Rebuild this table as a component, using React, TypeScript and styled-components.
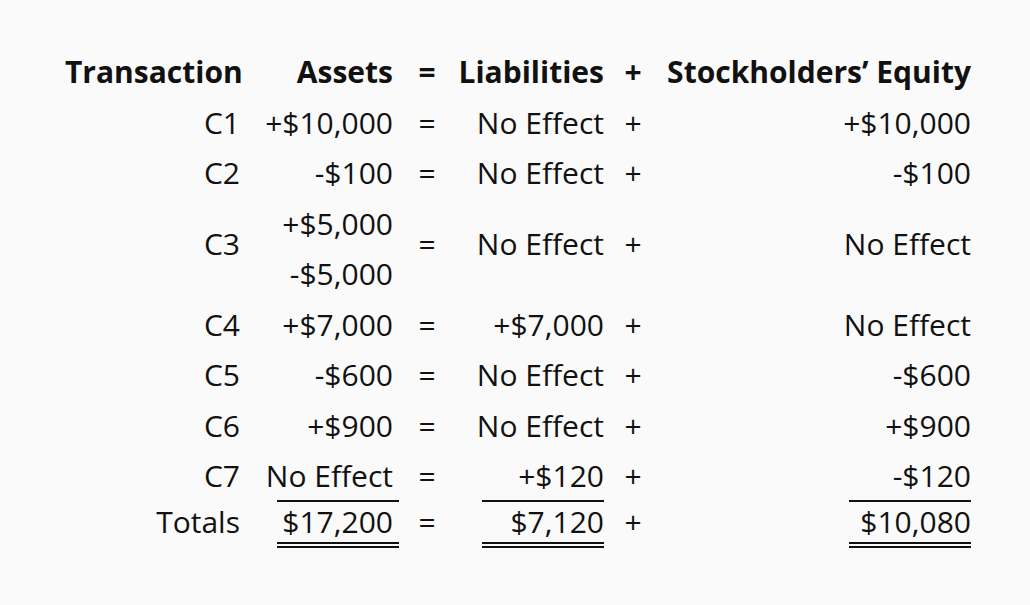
import React from "react";
import styled, { createGlobalStyle } from "styled-components";

const Global = createGlobalStyle`
  html, body { margin: 0; padding: 0; background: #fafafa; }
  body { font-family: "Open Sans", "Noto Sans", sans-serif; color: #111; }
`;

const Page = styled.div`
  width: 1030px;
  height: 605px;
  box-sizing: border-box;
  padding: 47px 0 0 65px;
  background: #fafafa;
`;

const Table = styled.div`
  display: grid;
  grid-template-columns: 175px 159px 56px 149px 58px 309px;
  font-size: 30px;
  line-height: 50.5px;
`;

const Cell = styled.div<{ $align?: "left" | "right" | "center"; $bold?: boolean; $pr?: number; $lift?: number }>`
  display: flex;
  flex-direction: column;
  justify-content: center;
  align-items: ${(p) => (p.$align === "center" ? "center" : p.$align === "left" ? "flex-start" : "flex-end")};
  font-weight: ${(p) => (p.$bold ? 700 : 400)};
  padding-right: ${(p) => p.$pr ?? 0}px;
  padding-bottom: ${(p) => (p.$lift ?? 0) * 2}px;
  white-space: nowrap;
`;

const TotalCell = styled(Cell)`
  line-height: 35px;
  justify-content: flex-start;
`;

const Ruled = styled.div<{ $rule: "single" | "double"; $pr?: number }>`
  display: flex;
  justify-content: flex-end;
  width: 122px;
  box-sizing: border-box;
  line-height: ${(p) => (p.$rule === "double" ? "35px" : "48px")};
  padding-right: ${(p) => p.$pr ?? 0}px;
  padding-bottom: ${(p) => (p.$rule === "double" ? 3 : 0)}px;
  border-bottom: ${(p) => (p.$rule === "double" ? "6px double #111" : "2px solid #111")};
`;

type Row = { label: string; assets: string[]; liab: string; eq: string };

const rows: Row[] = [
  { label: "C1", assets: ["+$10,000"], liab: "No Effect", eq: "+$10,000" },
  { label: "C2", assets: ["-$100"], liab: "No Effect", eq: "-$100" },
  { label: "C3", assets: ["+$5,000", "-$5,000"], liab: "No Effect", eq: "No Effect" },
  { label: "C4", assets: ["+$7,000"], liab: "+$7,000", eq: "No Effect" },
  { label: "C5", assets: ["-$600"], liab: "No Effect", eq: "-$600" },
  { label: "C6", assets: ["+$900"], liab: "No Effect", eq: "+$900" },
];

export default function App() {
  return (
    <Page>
      <Global />
      <Table>
        <Cell $align="left" $bold>Transaction</Cell>
        <Cell $bold $pr={6}>Assets</Cell>
        <Cell $align="center" $bold>=</Cell>
        <Cell $bold>Liabilities</Cell>
        <Cell $align="center" $bold>+</Cell>
        <Cell $bold>Stockholders’ Equity</Cell>

        {rows.map((r) => {
          const lift = r.assets.length > 1 ? 5 : 0;
          return (
            <React.Fragment key={r.label}>
              <Cell $lift={lift}>{r.label}</Cell>
              <Cell $pr={6}>
                {r.assets.map((a) => (
                  <span key={a}>{a}</span>
                ))}
              </Cell>
              <Cell $align="center" $lift={lift}>=</Cell>
              <Cell $lift={lift}>{r.liab}</Cell>
              <Cell $align="center" $lift={lift}>+</Cell>
              <Cell $lift={lift}>{r.eq}</Cell>
            </React.Fragment>
          );
        })}

        <Cell $lift={1}>C7</Cell>
        <Cell>
          <Ruled $rule="single" $pr={6}>No Effect</Ruled>
        </Cell>
        <Cell $align="center" $lift={1}>=</Cell>
        <Cell>
          <Ruled $rule="single">+$120</Ruled>
        </Cell>
        <Cell $align="center" $lift={1}>+</Cell>
        <Cell>
          <Ruled $rule="single">-$120</Ruled>
        </Cell>

        <TotalCell>Totals</TotalCell>
        <TotalCell>
          <Ruled $rule="double" $pr={6}>$17,200</Ruled>
        </TotalCell>
        <TotalCell $align="center">=</TotalCell>
        <TotalCell>
          <Ruled $rule="double">$7,120</Ruled>
        </TotalCell>
        <TotalCell $align="center">+</TotalCell>
        <TotalCell>
          <Ruled $rule="double">$10,080</Ruled>
        </TotalCell>
      </Table>
    </Page>
  );
}
